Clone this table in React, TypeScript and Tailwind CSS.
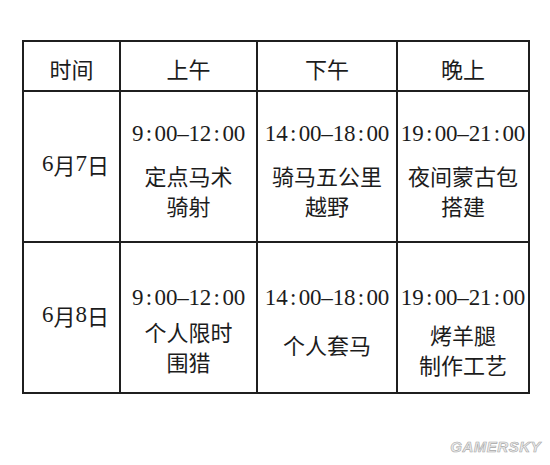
import { Fragment } from 'react';

const cjk = "font-['Noto_Sans_CJK_SC',sans-serif]";

type Slot = {
  time: string;
  lines: string[];
  gap: string;
};

type Row = {
  date: string;
  top: string;
  slots: Slot[];
};

const rows: Row[] = [
  {
    date: '6月7日',
    top: 'pt-[28px]',
    slots: [
      { time: '9:00-12:00', lines: ['定点马术', '骑射'], gap: 'mt-[12px]' },
      { time: '14:00-18:00', lines: ['骑马五公里', '越野'], gap: 'mt-[12px]' },
      { time: '19:00-21:00', lines: ['夜间蒙古包', '搭建'], gap: 'mt-[12px]' },
    ],
  },
  {
    date: '6月8日',
    top: 'pt-[41px]',
    slots: [
      { time: '9:00-12:00', lines: ['个人限时', '围猎'], gap: 'mt-[4px]' },
      { time: '14:00-18:00', lines: ['个人套马'], gap: 'mt-[17px]' },
      { time: '19:00-21:00', lines: ['烤羊腿', '制作工艺'], gap: 'mt-[7px]' },
    ],
  },
];

// half-width cells, like the monospaced digits of the original document font
function TimeText({ value }: { value: string }) {
  return (
    <div className="flex h-[28px] items-center font-['Liberation_Serif',serif] text-[23px] leading-[28px] text-[#1c1c1c]">
      {value.split('').map((ch, i) => (
        <span key={i} className="inline-block w-[11.3px] text-center">
          {ch === '-' ? '–' : ch}
        </span>
      ))}
    </div>
  );
}

function HeaderCell({ children }: { children: string }) {
  return (
    <div
      className={`flex h-[48px] items-center justify-center bg-white pt-[5px] text-[22px] text-[#1c1c1c] ${cjk}`}
    >
      {children}
    </div>
  );
}

function DateCell({ date }: { date: string }) {
  const [m, rest] = date.split('月');
  const d = rest.replace('日', '');
  return (
    <div className="flex h-[149px] items-center justify-center bg-white pb-[4px] pl-[8px] text-[22px] text-[#1c1c1c]">
      <span className="font-['Liberation_Serif',serif] text-[23px]">{m}</span>
      <span className={cjk}>月</span>
      <span className="font-['Liberation_Serif',serif] text-[23px]">{d}</span>
      <span className={cjk}>日</span>
    </div>
  );
}

function SlotCell({ slot, top }: { slot: Slot; top: string }) {
  return (
    <div className={`flex h-[149px] flex-col items-center bg-white ${top}`}>
      <TimeText value={slot.time} />
      <div className={`flex flex-col items-center ${slot.gap}`}>
        {slot.lines.map((line) => (
          <div
            key={line}
            className={`text-[22px] leading-[30px] text-[#1c1c1c] ${cjk}`}
          >
            {line}
          </div>
        ))}
      </div>
    </div>
  );
}

export default function App() {
  return (
    <div className="relative h-[465px] w-[550px] overflow-hidden bg-white">
      <div className="pt-[40px] pl-[22px]">
        <div className="grid w-[508px] grid-cols-[95px_135px_138px_130px] gap-[2px] bg-[#1f1f1f] p-[2px]">
          <HeaderCell>时间</HeaderCell>
          <HeaderCell>上午</HeaderCell>
          <HeaderCell>下午</HeaderCell>
          <HeaderCell>晚上</HeaderCell>
          {rows.map((row) => (
            <Fragment key={row.date}>
              <DateCell date={row.date} />
              {row.slots.map((slot) => (
                <SlotCell key={slot.time} slot={slot} top={row.top} />
              ))}
            </Fragment>
          ))}
        </div>
      </div>
      <div className="absolute right-[9px] bottom-[7px] font-['Liberation_Sans',sans-serif] text-[15px] font-bold tracking-[0.5px] text-[#ececec] italic [-webkit-text-stroke:0.6px_#a8a8a8]">
        GAMERSKY
      </div>
    </div>
  );
}
